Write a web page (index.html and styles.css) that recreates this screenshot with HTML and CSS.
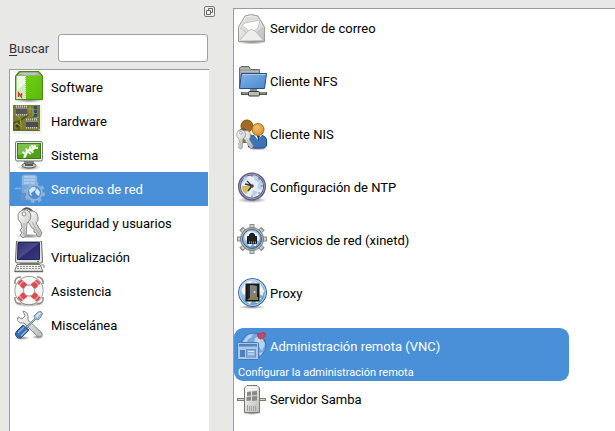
FILE: index.html
```html
<!DOCTYPE html>
<html lang="es">
<head>
<meta charset="utf-8">
<title>Centro de control</title>
<link rel="stylesheet" href="styles.css">
</head>
<body>
<svg class="defs" aria-hidden="true">
  <defs>
    <linearGradient id="metal" x1="0" y1="0" x2="1" y2="1"><stop offset="0" stop-color="#fff"/><stop offset="1" stop-color="#b8bab6"/></linearGradient>
    <linearGradient id="green" x1="0" y1="0" x2="1" y2="1"><stop offset="0" stop-color="#6fd010"/><stop offset="1" stop-color="#5cb80e"/></linearGradient>
    <linearGradient id="screen" x1="0" y1="0" x2="1" y2="1"><stop offset="0" stop-color="#303078"/><stop offset=".5" stop-color="#4a4a8c"/><stop offset=".52" stop-color="#2c2c72"/><stop offset="1" stop-color="#38387e"/></linearGradient>
    <linearGradient id="blue" x1="0" y1="0" x2="1" y2="1"><stop offset="0" stop-color="#82b4e6"/><stop offset="1" stop-color="#4a86cc"/></linearGradient>
    <radialGradient id="globe" cx=".4" cy=".3" r=".8"><stop offset="0" stop-color="#e3f0fb"/><stop offset=".6" stop-color="#8db9e4"/><stop offset="1" stop-color="#3c70b0"/></radialGradient>
    <radialGradient id="shade"><stop offset="0" stop-color="#000" stop-opacity=".5"/><stop offset="1" stop-color="#000" stop-opacity="0"/></radialGradient>
    <radialGradient id="orange" cx=".4" cy=".3" r=".8"><stop offset="0" stop-color="#f3bf70"/><stop offset="1" stop-color="#d58a2a"/></radialGradient>
    <symbol id="keys" viewBox="0 0 26 32">
      <path d="M5 4Q9-1 14 3Q17 6 13 9" fill="none" stroke="#555753" stroke-width="2"/>
      <path d="M13 4Q20 3 21 10Q22 14 19 16L25 26L23 30L20 29L19 26L17 25L17 22L15 21L12 16Q7 12 9 7Q10 4 13 4Z" fill="url(#metal)" stroke="#888a85"/>
      <path d="M6 3Q13 2 14 9Q14 14 10 16L9 29L6 31L3 28L5 26L3 23L5 21L4 16Q0 13 1 8Q2 4 6 3Z" fill="url(#metal)" stroke="#888a85"/>
      <circle cx="7" cy="7" r="2" fill="#fff" stroke="#888a85"/>
      <path d="M7 16V28M15 15L22 27" stroke="#aaa" stroke-width="1"/>
    </symbol>
    <symbol id="continents" viewBox="0 0 30 30">
      <path d="M3 11L8 4L14 2L13 6L10 8L12 11L8 14L6 18L3 15ZM17 3L24 6L28 13L26 19L22 16L20 12L16 10L18 7ZM8 19L13 20L15 24L12 28L8 25ZM20 21L25 21L21 27L18 26Z" fill="#fff" opacity=".8"/>
    </symbol>
  </defs>
</svg>

<main class="window">
  <aside class="sidebar">
    <div class="dock-bar">
      <button class="float-button" type="button" aria-label="Desacoplar panel">
        <svg viewBox="0 0 11 11" width="11" height="11"><rect x=".5" y=".5" width="10" height="10" rx="1.500" fill="#f2f2f1" stroke="#777"/><path d="M4.500 4.500V2.500H8.500V6.500H6.500M2.500 4.500H6.500V8.500H2.500Z" fill="none" stroke="#666"/></svg>
      </button>
    </div>
    <div class="search">
      <label class="label" for="search"><span class="accel">B</span>uscar</label>
      <input id="search" type="text">
    </div>
    <nav class="categories">
      <a class="category" href="#software">
        <svg class="icon" viewBox="0 0 32 32"><ellipse cx="16" cy="29" rx="16" ry="3" fill="url(#shade)"/><path d="M6 .5H26L29.500 5V28.500H2.500V5Z" fill="#55a812" stroke="#438c0c"/><path d="M7 1.500H25L28 5H4.500Z" fill="#a2a49f"/><path d="M8 1.500H24L27 4L24 3L22 4H10L8 3L5 4Z" fill="#c0c3bc"/><rect x="3.500" y="5" width="9" height="23" fill="#eef8e6"/><path d="M3.500 20L12.500 12V28H3.500Z" fill="#d3ebc0"/><rect x="12.500" y="5" width="16.500" height="23" fill="url(#green)"/><path d="M12.500 5V28" stroke="#e9ffcc" stroke-dasharray="1 1"/><path d="M5.500 26V22L8.500 26V22" fill="none" stroke="#df3026" stroke-width="1.300"/></svg>
        <span class="label">Software</span></a>
      <a class="category" href="#hardware">
        <svg class="icon" viewBox="0 0 32 32"><rect width="29" height="29" fill="#f0f0ee"/><path d="M0 0H27V24L25 25H0Z" fill="#7b7d2c"/><path d="M0 18L6 16V25H0ZM6 24V16L14 11H22" fill="none" stroke="#4d541b" stroke-width="1.500"/><path d="M2 9L7 13L8 20M13 4H20V11H15M17 1V8M3 18L9 22M21 14L26 12" fill="none" stroke="#a3a452"/><path d="M3 1.500H14M3 9.500H14M13 14.500H25M13 22.500H25" stroke="#ccc" stroke-width="2" stroke-dasharray="1 1"/><rect x="3" y="3" width="11" height="6" fill="#56584f"/><rect x="13" y="16" width="12" height="6" fill="#4b4d49"/><path d="M3 3.500H14M13 16.500H25" stroke="#8c8e88"/><path d="M22.500 1V12" stroke="#284f84" stroke-width="3" stroke-dasharray="3 1"/><circle cx="4" cy="21" r="1.500" fill="#39401a"/><path d="M0 25.500H27" stroke="#656725"/></svg>
        <span class="label">Hardware</span></a>
      <a class="category" href="#sistema">
        <svg class="icon" viewBox="0 0 32 32"><ellipse cx="16" cy="28.500" rx="12" ry="3" fill="url(#shade)"/><path d="M11 22H21V26H11Z" fill="#888a85"/><ellipse cx="16" cy="26.500" rx="7" ry="2.500" fill="#d3d7cf" stroke="#555753"/><path d="M12 26H20" stroke="#555753" stroke-width="2"/><rect x="2.500" y="2.500" width="27" height="19.500" rx="1.500" fill="#eeeeec" stroke="#777975"/><rect x="4.500" y="4.500" width="23" height="15" fill="#52a01a" stroke="#397a12"/><path d="M5 5H27L24 9L16 14L5 16Z" fill="#7cc04a"/><path d="M10.500 18Q12 18 13 15Q14 11 17 11Q21 11 22 6" fill="none" stroke="#f1f6ef" stroke-width="2.500"/><path d="M12 15L9.500 13M14 12L13 9.500M17 11V7.500M20 9L18.500 6M15 13L18 15M18 12L20.500 13.500M21 9L25 9" fill="none" stroke="#f1f6ef" stroke-width="2"/></svg>
        <span class="label">Sistema</span></a>
      <a class="category selected" href="#red" aria-current="page">
        <svg class="icon" viewBox="0 0 32 32"><path d="M2 15.500H8M25 15.500H31" stroke="#89afd9" stroke-width="1.500"/><path d="M8.500 3L11 1.500H22L24.500 3V27H8.500Z" fill="#89b5e2" stroke="#6a93c1"/><path d="M11 4H22M11 7H22M11 10H22" stroke="#b4d2ef" stroke-width="1.500"/><path d="M9 12H24V26H9Z" fill="#76a5d6"/><path d="M10 20V27M12 20V27" stroke="#527bac"/><circle cx="21.500" cy="19.500" r="9" fill="none" stroke="#8fb2d6" stroke-width="3" stroke-dasharray="3.530 3.530"/><circle cx="21.500" cy="19.500" r="7.500" fill="#6898cf" stroke="#92b5da" stroke-width="1.500"/><circle cx="21.500" cy="19.500" r="6" fill="#4e8bcf"/><path d="M16 17L19 14L22 14L23 16L21 18L18 20L19 23L17 22ZM24 15L27 19L26 23L24 22L22 19Z" fill="#d5e9fb"/></svg>
        <span class="label">Servicios de red</span></a>
      <a class="category" href="#seguridad">
        <svg class="icon" viewBox="0 0 32 32"><ellipse cx="16" cy="29" rx="13" ry="2.500" fill="url(#shade)"/><use href="#keys" x="4" y="0" width="26" height="32"/></svg>
        <span class="label">Seguridad y usuarios</span></a>
      <a class="category" href="#virtualizacion">
        <svg class="icon" viewBox="0 0 32 32"><path d="M8 21H25L27 24H6Z" fill="#777975"/><path d="M3.500 0H28.500L29.500 20Q29.500 22 28 22H4Q2.500 22 2.500 20Z" fill="#e4e5e2" stroke="#666864"/><path d="M5 1.500H26.500V18.500H4.500Z" fill="url(#screen)" stroke="#25255c"/><path d="M24 20.500H26" stroke="#4aa81a" stroke-width="1.500"/><path d="M4 23.500H27L30 30.500H1.500Z" fill="#eeeeec" stroke="#777975"/><path d="M4 25.500H27M4 27.500H28" stroke="#8d8f8b" stroke-dasharray="2 1"/><path d="M28 24H31V27" fill="none" stroke="#888a85"/><path d="M2 30.500H30" stroke="#666864" stroke-width="1.500"/></svg>
        <span class="label">Virtualización</span></a>
      <a class="category" href="#asistencia">
        <svg class="icon" viewBox="0 0 32 32"><ellipse cx="16" cy="29" rx="15" ry="3" fill="url(#shade)"/><path d="M8 2Q1 2 2 9M24 2Q31 2 30 9M2 22Q1 29 8 29M24 29Q31 29 30 22" fill="none" stroke="#888a85" stroke-width="1.500"/><circle cx="16" cy="15.500" r="9.500" fill="none" stroke="#888a85" stroke-width="10"/><circle cx="16" cy="15.500" r="9.500" fill="none" stroke="#f5f5f4" stroke-width="8.500"/><g fill="#dc4a4e"><path d="M8.500 4.500Q6 6 4.500 8.500L10 14L14.500 9.500Z"/><path d="M23.500 4.500Q26 6 27.500 8.500L22 14L17.500 9.500Z"/><path d="M8.500 26.500Q6 25 4.500 22.500L10 17L14.500 21.500Z"/><path d="M23.500 26.500Q26 25 27.500 22.500L22 17L17.500 21.500Z"/></g><circle cx="16" cy="15.500" r="5.500" fill="#fff" stroke="#999b97"/><circle cx="16" cy="15.500" r="11" stroke="#fff" stroke-width="1.500" fill="none" opacity=".4"/></svg>
        <span class="label">Asistencia</span></a>
      <a class="category" href="#miscelanea">
        <svg class="icon" viewBox="0 0 32 32"><ellipse cx="9" cy="29" rx="8" ry="2" fill="url(#shade)"/><ellipse cx="25" cy="28" rx="6" ry="2" fill="url(#shade)"/><path d="M10 2L12 7L9 10L5 8Q3 12 7 14L11 14L24 27Q27 29 29 27Q30 25 28 23L15 11Q16 3 10 2Z" fill="url(#metal)" stroke="#888a85"/><path d="M12 19L22 9L21 7L25 3L28 2.500L29.500 4.500L28 8L25 11L23 10L13 20Z" fill="#a6bddb" stroke="#7188aa"/><path d="M23 8L27 4" stroke="#e9f1fa" stroke-width="1.500"/><path d="M10 16L16 21L8 29Q5 30 3 27Q2 25 3 23Z" fill="#3a6db4" stroke="#204a87"/><path d="M5 24L11 18M8 27L14 21" stroke="#8fb5e4" stroke-width="1.300"/></svg>
        <span class="label">Miscelánea</span></a>
    </nav>
  </aside>

  <section class="modules">
    <a class="module" href="#mail">
      <svg class="icon" viewBox="0 0 32 32"><ellipse cx="16" cy="30" rx="15" ry="2.500" fill="url(#shade)"/><path d="M2.500 15L9 4Q15 1 22 4L28.500 15V29.500H2.500Z" fill="url(#metal)" stroke="#999b97"/><path d="M4 15L10 5H21L27 15L20 20H11Z" fill="#dcdddb"/><path d="M6 13L9 11L24 8L22 16L15 21Z" fill="#fff" stroke="#c4c6c2"/><path d="M4 28L12 19Q15 16 19 19L27 28" fill="#eeeeec" stroke="#c0c2be"/><path d="M4 16L11 21M27 16L20 21" stroke="#c0c2be"/></svg>
      <span class="label">Servidor de correo</span></a>
    <a class="module" href="#nfs">
      <svg class="icon" viewBox="0 0 32 32"><path d="M3.500 22V3L5 1.500H13L14.500 4.500H23.500V20Z" fill="#a2a49f" stroke="#6d6f6b"/><path d="M5 3.500H13M5 6.500H23" stroke="#b9bbb6"/><path d="M14 23H21V27H14Z" fill="#888a85"/><path d="M5.500 8.500H30.500L28.500 23.500H3.500Z" fill="url(#blue)" stroke="#234f86"/><path d="M6.500 9.500H29.500" stroke="#a7cdf1"/><path d="M5 28.500H31" stroke="#555753" stroke-width="3"/><path d="M6 28H30" stroke="#babdb6"/><rect x="12.500" y="26.500" width="11" height="4.500" rx="1" fill="#babdb6" stroke="#3c3e3b"/></svg>
      <span class="label">Cliente NFS</span></a>
    <a class="module" href="#nis">
      <svg class="icon" viewBox="0 0 32 32"><ellipse cx="22" cy="30" rx="10" ry="3" fill="url(#shade)"/><circle cx="11" cy="8" r="6" fill="#a56b26" stroke="#80500f"/><path d="M4 22Q5 13 12 14L17 18V25H4Z" fill="#697f4a"/><path d="M12.500 29V21Q14 17 22 17Q30 17 30.500 22V28L28 30H15Z" fill="#3d73b7" stroke="#204a87"/><path d="M18 17H26L22 22Z" fill="#fff"/><path d="M21 18H24L22.500 23Z" fill="#173c72"/><circle cx="22" cy="11.500" r="6" fill="url(#orange)" stroke="#b06814"/><use href="#keys" x="0" y="10" width="18" height="22"/></svg>
      <span class="label">Cliente NIS</span></a>
    <a class="module" href="#ntp">
      <svg class="icon" viewBox="0 0 32 32"><ellipse cx="16" cy="29" rx="15" ry="3" fill="url(#shade)"/><circle cx="16" cy="15.500" r="12.500" fill="#e6edf4" stroke="#55557e" stroke-width="3"/><circle cx="16" cy="15.500" r="12.500" fill="none" stroke="#a4a4c6"/><path d="M17 4L21 5L24 8L27 13L25 19L21 17L23 12L19 9ZM8 6L12 5L10 9L6 12ZM17 19L22 21L19 25L16 24Z" fill="#b6d0e9"/><path d="M16 15H6Q6 21 10 23Z" fill="#d0b040" opacity=".85"/><path d="M11 10L16 15L12 20M9 13L17 15" fill="none" stroke="#2e3436" stroke-width="1.300"/><circle cx="16" cy="15" r="1.800" fill="#444"/><g fill="#555"><circle cx="16" cy="5" r=".7"/><circle cx="26" cy="15" r=".7"/><circle cx="16" cy="25" r=".7"/><circle cx="23" cy="8" r=".7"/><circle cx="23" cy="22" r=".7"/></g></svg>
      <span class="label">Configuración de NTP</span></a>
    <a class="module" href="#xinetd">
      <svg class="icon" viewBox="0 0 32 32"><g stroke="#888a85" stroke-width="5"><path d="M16 0V30M1 15H31M5 4.500L27 25.500M5 25.500L27 4.500"/></g><g stroke="#d0d2ce" stroke-width="3"><path d="M16 1V29M2 15H30M6 5.500L26 24.500M6 24.500L26 5.500"/></g><circle cx="16" cy="15" r="11.500" fill="#b4b7b1" stroke="#777975"/><circle cx="16" cy="15" r="9.500" fill="url(#globe)" stroke="#3c5f91"/><use href="#continents" x="7" y="6" width="18" height="18"/><path d="M11.500 19.500V12.500H13.500V10.500H14.500V9.500H17.500V10.500H18.500V12.500H20.500V19.500Z" fill="#232523" stroke="#111"/><path d="M13 18.500H20" stroke="#c8a433" stroke-width="2" stroke-dasharray="1 1"/></svg>
      <span class="label">Servicios de red (xinetd)</span></a>
    <a class="module" href="#proxy">
      <svg class="icon" viewBox="0 0 32 32"><ellipse cx="16" cy="30" rx="14" ry="2" fill="url(#shade)"/><circle cx="16.500" cy="15.500" r="14" fill="url(#globe)" stroke="#28568f"/><circle cx="16.500" cy="15.500" r="13" fill="none" stroke="#c1daf1"/><use href="#continents" x="3" y="2" width="27" height="27"/><path d="M10.500 7.500H22.500V23.500H10.500Z" fill="#262824" stroke="#151615" stroke-width="2"/><path d="M14 8L21 9V20L14 22Z" fill="#777975"/><path d="M11 23L15 20H22V23Z" fill="#85852e"/><path d="M14 8L20 9V19L14 22Z" fill="#80827d"/><circle cx="18.500" cy="15" r="1" fill="#ddd"/></svg>
      <span class="label">Proxy</span></a>
    <a class="module selected" href="#vnc" aria-current="true">
      <svg class="icon" viewBox="0 0 32 32"><circle cx="17.500" cy="15.500" r="12.500" fill="#73a9df" stroke="#3e73b1"/><path d="M7 12L12 5L17 4L15 8L12 9L11 12ZM19 8L24 5L29 14L26 21L22 15L18 12ZM23 23L27 22L24 26Z" fill="#b5d3ef"/><path d="M20 14L25 7" stroke="#d0dce8" stroke-width="2"/><path d="M25 4Q27 1 29 3Q30.500 5 28.500 7Q26 9.500 24 9Q21.500 8 21.500 5Q22 2 25 4Z" fill="#c94762" stroke="#a8425f"/><path d="M28 9L29 12" stroke="#516c91"/><rect x="1.500" y="12.500" width="21" height="17" rx="1" fill="#a9c8e8" stroke="#4979b2"/><rect x="3" y="14" width="18" height="2.500" fill="#5183bd"/><rect x="4" y="20" width="5" height="7" fill="#4d80bc"/><rect x="10.500" y="19.500" width="9" height="7.500" fill="#86b1db" stroke="#6694c7"/><path d="M12 21.500H18M12 24H18" stroke="#d7e7f5"/></svg>
      <span class="label">Administración remota (VNC)</span>
      <span class="summary">Configurar la administración remota</span></a>
    <a class="module" href="#samba">
      <svg class="icon" viewBox="0 0 32 32"><ellipse cx="16" cy="30" rx="9" ry="2" fill="url(#shade)"/><path d="M1 16.500H10M23 16.500H30" stroke="#777975" stroke-width="3"/><path d="M2 16.500H10M23 16.500H29" stroke="#d3d7cf"/><path d="M8.500 5L11 2.500H21L23.500 5V29.500H8.500Z" fill="url(#metal)" stroke="#777975"/><path d="M10 4.500H22M10 6.500H22" stroke="#fff"/><path d="M11 9L15 8.500V12.500L11 13ZM16 8.500L21 8V12L16 12.500ZM10.500 14L15 13.500V17.500L10.500 18ZM16 13.500L21 13V17.500L16 18Z" fill="#888a85"/><path d="M11.500 22V28M13.500 23V28M15.500 23V28M17.500 23V28M19.500 23V28" stroke="#a0a29d"/></svg>
      <span class="label">Servidor Samba</span></a>
  </section>
</main>
</body>
</html>
```
FILE: styles.css
```css
* {
  box-sizing: border-box;
}

body {
  margin: 0;
  background: #e8e8e6;
  color: #000;
  font: 13px/18px Roboto, "Liberation Sans", sans-serif;
}

.defs {
  position: absolute;
  width: 0;
  height: 0;
}

.window {
  display: grid;
  grid-template-columns: 215px 1fr;
  gap: 18px;
  height: 100vh;
  overflow: hidden;
}

.sidebar {
  display: flex;
  flex-direction: column;
  min-height: 0;
  padding: 6px 0 0 9px;
}

.dock-bar {
  display: flex;
  justify-content: flex-end;
  margin-bottom: 17px;
}

.float-button {
  display: flex;
  padding: 0;
  border: 0;
  background: none;
}

.search {
  display: flex;
  align-items: center;
  gap: 9px;
  margin: 0 7px 7px 0;
  color: #2e3436;
}

.label {
  padding-top: 2px;
}

.accel {
  text-decoration: underline;
  text-underline-offset: 2px;
}

.search input {
  flex: 1;
  min-width: 0;
  height: 28px;
  padding: 0 6px;
  border: 1px solid #a0a09e;
  border-radius: 3px;
  background: #fff;
  font: inherit;
}

.categories {
  flex: 1;
  min-height: 0;
  margin-right: 6px;
  padding-right: 1px;
  overflow: hidden;
  border: solid #9b9b99;
  border-width: 1px 0 0 1px;
  background: #fff;
}

.category {
  display: flex;
  align-items: center;
  gap: 6px;
  height: 34px;
  padding: 0 3px;
  color: inherit;
  text-decoration: none;
}

.icon {
  display: block;
  width: 32px;
  height: 32px;
}

.modules {
  min-height: 0;
  margin-top: 8px;
  padding-top: 1px;
  overflow: hidden;
  border: solid #9b9b99;
  border-width: 1px 0 0 1px;
  background: #fff;
}

.module {
  display: grid;
  grid-template-columns: 32px 1fr;
  grid-template-rows: 34px 17px;
  column-gap: 2px;
  align-items: center;
  width: 88%;
  height: 53px;
  padding: 1px 2px;
  border-radius: 9px;
  color: inherit;
  text-decoration: none;
}

.summary {
  grid-column: 1 / -1;
  padding: 2px 0 0 2px;
  font-size: 11px;
  line-height: 14px;
}

.selected {
  background: #4a90d9;
  color: #fff;
}
```
